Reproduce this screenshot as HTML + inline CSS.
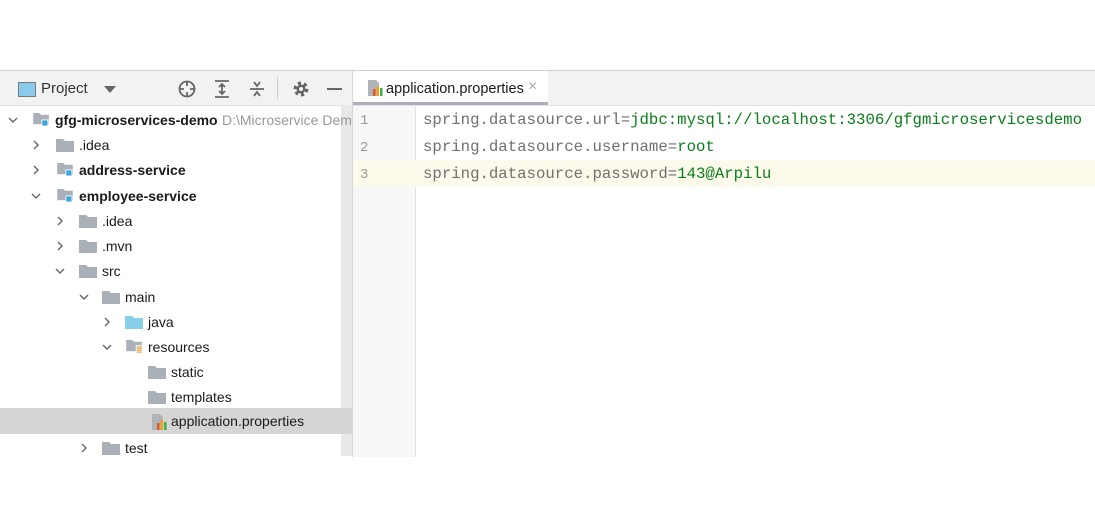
<!DOCTYPE html>
<html><head><style>
body{margin:0;width:1095px;height:525px;background:#fff;position:relative;overflow:hidden;font-family:"Liberation Sans",sans-serif;}
.abs{position:absolute}
#left{left:0;top:70px;width:352px;height:386px;background:#fff;border-top:1px solid #d0d0d0;}
#tb{left:0;top:0;width:352px;height:34px;background:#f2f2f2;border-bottom:1px solid #e6e6e6}
.row{position:absolute;left:0;height:25px;width:341px;font-size:14px;color:#1a1a1a;line-height:25px;white-space:nowrap}
.row.sel{background:#d5d5d5;width:352px}
.chev{position:absolute;top:0;width:10px;height:25px}
.fold{position:absolute;top:6px;width:18px;height:13px}
.lbl{position:absolute;top:0}
#sb{left:341px;top:105px;width:11px;height:351px;background:#e8e8e8}
#right{left:352px;top:70px;width:743px;height:386px;border-top:1px solid #d0d0d0;border-left:1px solid #d6d6d6;overflow:hidden}
#tabs{left:0;top:0;width:743px;height:34px;background:#f2f2f2;border-bottom:1px solid #e2e2e2}
#tab{left:0;top:0;width:195px;height:31px;background:#fff;border-bottom:3px solid #aab1bd}
#gut{left:0;top:35px;width:62px;height:351px;background:#f7f7f7;border-right:1px solid #e0e0e0}
.ln{position:absolute;left:7px;font-family:"Liberation Mono",monospace;font-size:14px;color:#9a9a9a}
.code{position:absolute;left:70px;font-family:"Liberation Mono",monospace;font-size:15.7px;color:#707070;white-space:pre}
.code b{font-weight:normal;color:#0b7d1b}
</style></head><body>
<div id="left" class="abs">
 <div id="tb" class="abs">
  <div class="abs" style="left:18px;top:11px;width:16px;height:13px;border:1px solid #7a7a7a;background:#88cbea"></div>
  <div class="abs" style="left:41px;top:9px;font-size:15px;color:#333">Project</div>
  <div class="abs" style="left:104px;top:15px;width:0;height:0;border-left:6px solid transparent;border-right:6px solid transparent;border-top:7px solid #666"></div>
  <svg class="abs" style="left:176px;top:8px" width="22" height="20" viewBox="0 0 22 20"><circle cx="11" cy="10" r="7.5" fill="none" stroke="#666" stroke-width="1.8"/><path d="M11 2v5M11 13v5M3 10h5M14 10h5" stroke="#666" stroke-width="1.8"/></svg>
  <svg class="abs" style="left:212px;top:8px" width="20" height="20" viewBox="0 0 20 20"><path d="M3 2h14M3 18h14M10 5v10M7 8l3-3 3 3M7 12l3 3 3-3" stroke="#666" stroke-width="1.8" fill="none"/></svg>
  <svg class="abs" style="left:247px;top:8px" width="20" height="20" viewBox="0 0 20 20"><path d="M3 10h14M7 3l3 4 3-4M7 17l3-4 3 4" stroke="#666" stroke-width="1.8" fill="none"/></svg>
  <div class="abs" style="left:277px;top:6px;width:1px;height:22px;background:#ccc"></div>
  <svg class="abs" style="left:291px;top:8px" width="20" height="20" viewBox="0 0 20 20"><circle cx="10" cy="10" r="5.5" fill="none" stroke="#666" stroke-width="4" stroke-dasharray="3 2.7"/><circle cx="10" cy="10" r="4.5" fill="#666"/><circle cx="10" cy="10" r="2" fill="#f2f2f2"/></svg>
  <div class="abs" style="left:327px;top:17px;width:15px;height:2px;background:#666"></div>
 </div>
</div>
<div id="sb" class="abs"></div>
<div id="right" class="abs">
 <div id="tabs" class="abs"></div>
 <div id="tab" class="abs">
  <svg class="abs" style="left:13px;top:8px" width="18" height="18" viewBox="0 0 18 18"><path d="M2 1h8l3 3v13H2z" fill="#b0b4b8"/><rect x="7" y="10" width="2.5" height="7" fill="#e05a1f"/><rect x="10.5" y="7" width="2.5" height="10" fill="#f0a020"/><rect x="14" y="9" width="2.5" height="8" fill="#3cb04a"/></svg>
  <div class="abs" style="left:33px;top:10px;font-size:14.5px;color:#1a1a1a">application.properties</div>
  <div class="abs" style="left:175px;top:7px;font-size:16px;color:#aaa">×</div>
 </div>
 <div id="gut" class="abs"></div>
 <div class="abs" style="left:0;top:89px;width:743px;height:27px;background:#fcfaeb"></div>
 <div class="ln" style="top:42px">1</div>
 <div class="ln" style="top:69px">2</div>
 <div class="ln" style="top:96px">3</div>
 <div class="code" style="top:40px">spring.datasource.url=<b>jdbc:mysql://localhost:3306/gfgmicroservicesdemo</b></div>
 <div class="code" style="top:67px">spring.datasource.username=<b>root</b></div>
 <div class="code" style="top:94px">spring.datasource.password=<b>143@Arpilu</b></div>
</div>
<div class="row" style="top:108px"><svg class="chev" style="left:8px" viewBox="0 0 10 25"><path d="M1 10l4 4 4-4" stroke="#666" stroke-width="1.4" fill="none"/></svg>
<svg class="fold" style="left:32px;top:5px" viewBox="0 0 18 15"><path d="M0 0h7l2 2h9v11H0z" fill="#a9b0b7"/><rect x="10" y="8" width="7" height="7" fill="#3aa6d9" stroke="#fff"/></svg>
<span class="lbl" style="left:55px;font-weight:bold">gfg-microservices-demo</span><span class="lbl" style="left:222px;color:#999">D:\Microservice Dem</span></div>
<div class="row" style="top:133px"><svg class="chev" style="left:31px" viewBox="0 0 10 25"><path d="M3 8l4 4-4 4" stroke="#666" stroke-width="1.4" fill="none"/></svg>
<svg class="fold" style="left:56px" viewBox="0 0 18 13"><path d="M0 0h7l2 2h9v11H0z" fill="#a9b0b7"/></svg><span class="lbl" style="left:79px">.idea</span></div>
<div class="row" style="top:158px"><svg class="chev" style="left:31px" viewBox="0 0 10 25"><path d="M3 8l4 4-4 4" stroke="#666" stroke-width="1.4" fill="none"/></svg>
<svg class="fold" style="left:56px;top:5px" viewBox="0 0 18 15"><path d="M0 0h7l2 2h9v11H0z" fill="#a9b0b7"/><rect x="10" y="8" width="7" height="7" fill="#3aa6d9" stroke="#fff"/></svg><span class="lbl" style="left:79px;font-weight:bold">address-service</span></div>
<div class="row" style="top:184px"><svg class="chev" style="left:31px" viewBox="0 0 10 25"><path d="M1 10l4 4 4-4" stroke="#666" stroke-width="1.4" fill="none"/></svg>
<svg class="fold" style="left:56px;top:5px" viewBox="0 0 18 15"><path d="M0 0h7l2 2h9v11H0z" fill="#a9b0b7"/><rect x="10" y="8" width="7" height="7" fill="#3aa6d9" stroke="#fff"/></svg><span class="lbl" style="left:79px;font-weight:bold">employee-service</span></div>
<div class="row" style="top:209px"><svg class="chev" style="left:55px" viewBox="0 0 10 25"><path d="M3 8l4 4-4 4" stroke="#666" stroke-width="1.4" fill="none"/></svg>
<svg class="fold" style="left:79px" viewBox="0 0 18 13"><path d="M0 0h7l2 2h9v11H0z" fill="#a9b0b7"/></svg><span class="lbl" style="left:102px">.idea</span></div>
<div class="row" style="top:234px"><svg class="chev" style="left:55px" viewBox="0 0 10 25"><path d="M3 8l4 4-4 4" stroke="#666" stroke-width="1.4" fill="none"/></svg>
<svg class="fold" style="left:79px" viewBox="0 0 18 13"><path d="M0 0h7l2 2h9v11H0z" fill="#a9b0b7"/></svg><span class="lbl" style="left:102px">.mvn</span></div>
<div class="row" style="top:259px"><svg class="chev" style="left:55px" viewBox="0 0 10 25"><path d="M1 10l4 4 4-4" stroke="#666" stroke-width="1.4" fill="none"/></svg>
<svg class="fold" style="left:79px" viewBox="0 0 18 13"><path d="M0 0h7l2 2h9v11H0z" fill="#a9b0b7"/></svg><span class="lbl" style="left:102px">src</span></div>
<div class="row" style="top:285px"><svg class="chev" style="left:79px" viewBox="0 0 10 25"><path d="M1 10l4 4 4-4" stroke="#666" stroke-width="1.4" fill="none"/></svg>
<svg class="fold" style="left:102px" viewBox="0 0 18 13"><path d="M0 0h7l2 2h9v11H0z" fill="#a9b0b7"/></svg><span class="lbl" style="left:125px">main</span></div>
<div class="row" style="top:310px"><svg class="chev" style="left:102px" viewBox="0 0 10 25"><path d="M3 8l4 4-4 4" stroke="#666" stroke-width="1.4" fill="none"/></svg>
<svg class="fold" style="left:125px" viewBox="0 0 18 13"><path d="M0 0h7l2 2h9v11H0z" fill="#87cfe9"/></svg><span class="lbl" style="left:148px">java</span></div>
<div class="row" style="top:335px"><svg class="chev" style="left:102px" viewBox="0 0 10 25"><path d="M1 10l4 4 4-4" stroke="#666" stroke-width="1.4" fill="none"/></svg>
<svg class="fold" style="left:125px;top:5px" viewBox="0 0 18 15"><path d="M0 0h7l2 2h9v11H0z" fill="#a9b0b7"/><rect x="11" y="6" width="7" height="9" fill="#fff"/><path d="M12 8h6M12 10h6M12 12h6M12 14h6" stroke="#e0a040" stroke-width="1.2"/></svg><span class="lbl" style="left:148px">resources</span></div>
<div class="row" style="top:360px"><svg class="fold" style="left:148px" viewBox="0 0 18 13"><path d="M0 0h7l2 2h9v11H0z" fill="#a9b0b7"/></svg><span class="lbl" style="left:171px">static</span></div>
<div class="row" style="top:385px"><svg class="fold" style="left:148px" viewBox="0 0 18 13"><path d="M0 0h7l2 2h9v11H0z" fill="#a9b0b7"/></svg><span class="lbl" style="left:171px">templates</span></div>
<div class="row sel" style="top:408px;height:26px;line-height:27px"><svg class="abs" style="left:150px;top:5px" width="18" height="18" viewBox="0 0 18 18"><path d="M2 1h8l3 3v13H2z" fill="#b0b4b8"/><rect x="7" y="10" width="2.5" height="7" fill="#e05a1f"/><rect x="10.5" y="7" width="2.5" height="10" fill="#f0a020"/><rect x="14" y="9" width="2.5" height="8" fill="#3cb04a"/></svg><span class="lbl" style="left:171px">application.properties</span></div>
<div class="row" style="top:436px;height:20px;overflow:hidden"><svg class="chev" style="left:79px" viewBox="0 0 10 25"><path d="M3 8l4 4-4 4" stroke="#666" stroke-width="1.4" fill="none"/></svg>
<svg class="fold" style="left:102px" viewBox="0 0 18 13"><path d="M0 0h7l2 2h9v11H0z" fill="#a9b0b7"/></svg><span class="lbl" style="left:125px">test</span></div>
</body></html>
